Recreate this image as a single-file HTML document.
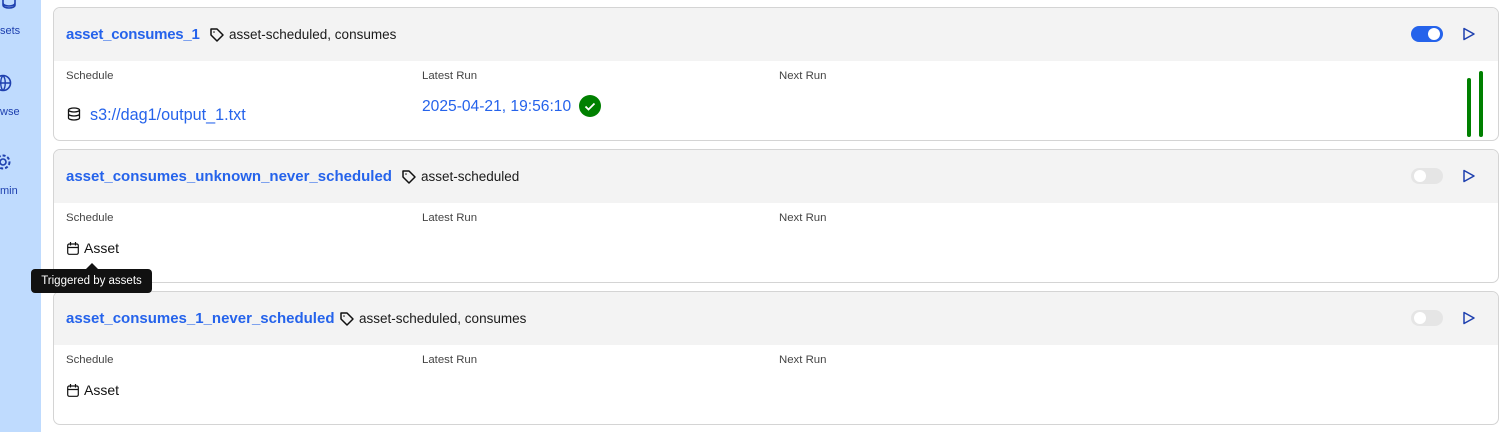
<!DOCTYPE html>
<html><head><meta charset="utf-8"><style>
*{box-sizing:border-box;margin:0;padding:0}
body{width:1507px;height:432px;overflow:hidden;background:#fff;font-family:"Liberation Sans",sans-serif;position:relative;color:#1a1a1a}
.side{position:absolute;left:0;top:0;width:41px;height:432px;background:#bfdbfe}
.side .t{position:absolute;font-size:11px;color:#1e40af}
.card{position:absolute;left:53px;width:1446px;height:134px;border:1px solid #d4d4d4;border-radius:7px;overflow:hidden;background:#fff}
.hd{height:53px;background:#f3f3f3;position:relative}
.title{position:absolute;left:12px;top:18px;font-size:15px;font-weight:bold;color:#2563eb}
.tag{position:absolute;top:19px;font-size:13.5px;color:#1a1a1a}
.tag svg{position:absolute;left:-20px;top:0}
.lbl{position:absolute;top:62px;font-size:11.4px;color:#444}
.tog{position:absolute;right:55px;top:18px;width:32px;height:16px;border-radius:8px}
.tog i{position:absolute;top:2px;width:12px;height:12px;border-radius:50%;background:#fff}
.play{position:absolute;right:22px;top:19px}
</style></head><body>
<div class="side">
<svg style="position:absolute;left:2px;top:0" width="14" height="10" viewBox="0 0 14 10"><path d="M1 0v5c0 2 3 3 6 3s6-1 6-3V0M1 3c0 2 3 3 6 3s6-1 6-3" fill="none" stroke="#1e40af" stroke-width="1.6"/></svg>
<div class="t" style="left:0;top:25px">sets</div>
<svg style="position:absolute;left:-6px;top:74px" width="18" height="18" viewBox="0 0 18 18"><circle cx="9" cy="9" r="7.5" fill="none" stroke="#1e40af" stroke-width="1.6"/><path d="M1.5 9h15M9 1.5c-3 3-3 12 0 15M9 1.5c3 3 3 12 0 15" fill="none" stroke="#1e40af" stroke-width="1.4"/></svg>
<div class="t" style="left:0;top:106px">wse</div>
<svg style="position:absolute;left:-6px;top:153px" width="18" height="18" viewBox="0 0 18 18"><circle cx="9" cy="9" r="3" fill="none" stroke="#1e40af" stroke-width="1.6"/><circle cx="9" cy="9" r="6.5" fill="none" stroke="#1e40af" stroke-width="2" stroke-dasharray="3 2"/></svg>
<div class="t" style="left:0;top:185px">min</div>
</div>

<div class="card" style="top:7px">
<div class="hd"><div class="title" style="letter-spacing:-0.25px">asset_consumes_1</div>
<div class="tag" style="left:175px"><svg width="16" height="16" viewBox="0 0 16 16"><path d="M2 2h6l6 6-6 6-6-6z" fill="none" stroke="#111" stroke-width="1.5" stroke-linejoin="round"/><circle cx="5" cy="5" r=".8" fill="#111"/></svg>asset-scheduled, consumes</div>
<div class="tog" style="background:#2563eb"><i style="right:3px"></i></div>
<svg class="play" width="14" height="14" viewBox="0 0 14 14"><path d="M2 1.5l10 5.5-10 5.5z" fill="none" stroke="#1e40af" stroke-width="1.5" stroke-linejoin="round"/></svg>
</div>
<div class="lbl" style="left:12px">Schedule</div><div class="lbl" style="left:368px">Latest Run</div><div class="lbl" style="left:725px">Next Run</div>
<svg style="position:absolute;left:13px;top:99px" width="14" height="14" viewBox="0 0 14 14"><ellipse cx="7" cy="3" rx="5.5" ry="2" fill="none" stroke="#111" stroke-width="1.3"/><path d="M1.5 3v8c0 1.1 2.5 2 5.5 2s5.5-.9 5.5-2V3M1.5 7c0 1.1 2.5 2 5.5 2s5.5-.9 5.5-2" fill="none" stroke="#111" stroke-width="1.3"/></svg>
<div style="position:absolute;left:36px;top:98px;font-size:16.2px;color:#2563eb">s3://dag1/output_1.txt</div>
<div style="position:absolute;left:368px;top:90px;font-size:15.6px;color:#2563eb">2025-04-21, 19:56:10</div>
<svg style="position:absolute;left:525px;top:87px" width="22" height="22" viewBox="0 0 22 22"><circle cx="11" cy="11" r="11" fill="#008000"/><path d="M6.5 11.5l3 3 6-6" fill="none" stroke="#fff" stroke-width="1.8"/></svg>
<div style="position:absolute;left:1413px;top:70px;width:4px;height:59px;background:#008000;border-radius:2px"></div>
<div style="position:absolute;left:1425px;top:63px;width:4px;height:66px;background:#008000;border-radius:2px"></div>
</div>

<div class="card" style="top:149px">
<div class="hd"><div class="title">asset_consumes_unknown_never_scheduled</div>
<div class="tag" style="left:367px"><svg width="16" height="16" viewBox="0 0 16 16"><path d="M2 2h6l6 6-6 6-6-6z" fill="none" stroke="#111" stroke-width="1.5" stroke-linejoin="round"/><circle cx="5" cy="5" r=".8" fill="#111"/></svg>asset-scheduled</div>
<div class="tog" style="background:#e5e5e5"><i style="left:3px"></i></div>
<svg class="play" width="14" height="14" viewBox="0 0 14 14"><path d="M2 1.5l10 5.5-10 5.5z" fill="none" stroke="#1e40af" stroke-width="1.5" stroke-linejoin="round"/></svg>
</div>
<div class="lbl" style="left:12px">Schedule</div><div class="lbl" style="left:368px">Latest Run</div><div class="lbl" style="left:725px">Next Run</div>
<svg style="position:absolute;left:13px;top:92px" width="12" height="13" viewBox="0 0 12 13"><rect x=".7" y="2" width="10.6" height="10.3" rx="1.5" fill="none" stroke="#111" stroke-width="1.2"/><path d="M.7 5.5h10.6M3.5 0v3.5M8.5 0v3.5" stroke="#111" stroke-width="1.2"/></svg>
<div style="position:absolute;left:30px;top:90px;font-size:14px;color:#111">Asset</div>
</div>

<div class="card" style="top:291px">
<div class="hd"><div class="title">asset_consumes_1_never_scheduled</div>
<div class="tag" style="left:305px"><svg width="16" height="16" viewBox="0 0 16 16"><path d="M2 2h6l6 6-6 6-6-6z" fill="none" stroke="#111" stroke-width="1.5" stroke-linejoin="round"/><circle cx="5" cy="5" r=".8" fill="#111"/></svg>asset-scheduled, consumes</div>
<div class="tog" style="background:#e5e5e5"><i style="left:3px"></i></div>
<svg class="play" width="14" height="14" viewBox="0 0 14 14"><path d="M2 1.5l10 5.5-10 5.5z" fill="none" stroke="#1e40af" stroke-width="1.5" stroke-linejoin="round"/></svg>
</div>
<div class="lbl" style="left:12px">Schedule</div><div class="lbl" style="left:368px">Latest Run</div><div class="lbl" style="left:725px">Next Run</div>
<svg style="position:absolute;left:13px;top:92px" width="12" height="13" viewBox="0 0 12 13"><rect x=".7" y="2" width="10.6" height="10.3" rx="1.5" fill="none" stroke="#111" stroke-width="1.2"/><path d="M.7 5.5h10.6M3.5 0v3.5M8.5 0v3.5" stroke="#111" stroke-width="1.2"/></svg>
<div style="position:absolute;left:30px;top:90px;font-size:14px;color:#111">Asset</div>
</div>

<div style="position:absolute;left:31px;top:269px;width:121px;height:24px;background:#111;border-radius:4px;color:#fff;font-size:11.5px;line-height:24px;text-align:center">Triggered by assets</div>
<div style="position:absolute;left:86px;top:263px;width:0;height:0;border-left:6px solid transparent;border-right:6px solid transparent;border-bottom:6px solid #111"></div>
</body></html>
